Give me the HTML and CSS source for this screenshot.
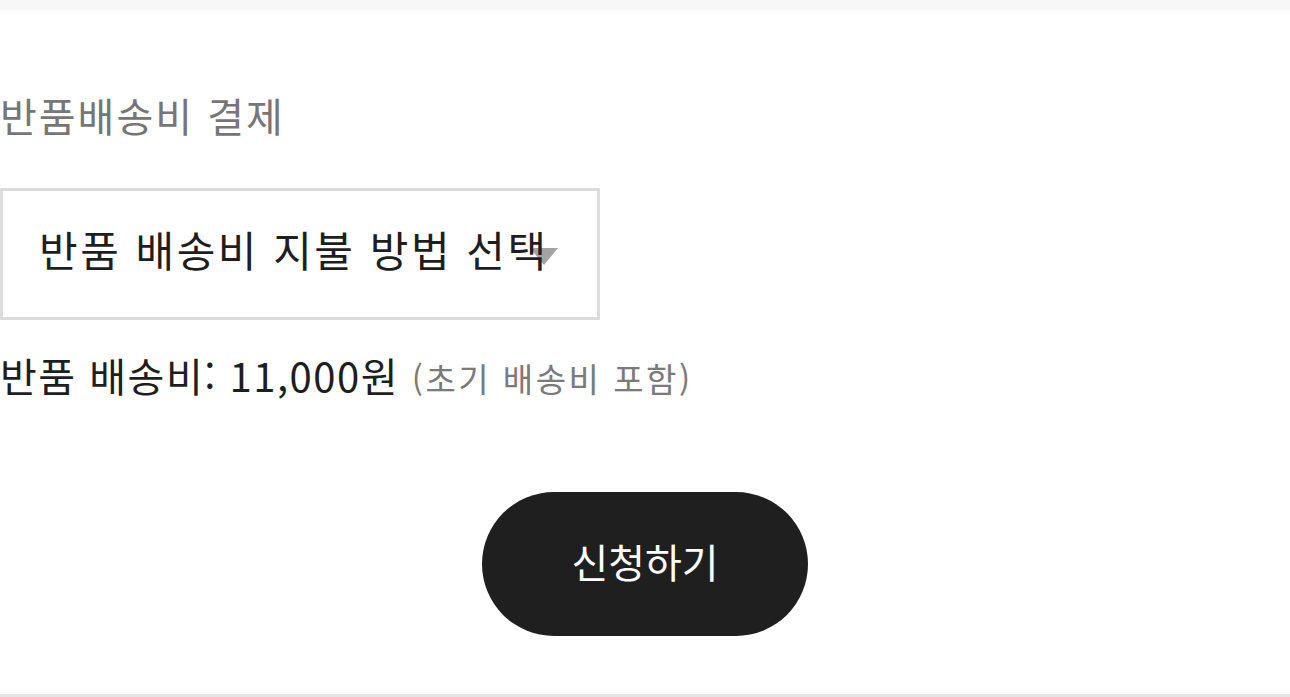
FILE: index.html
```html
<!DOCTYPE html>
<html lang="ko">
<head>
<meta charset="utf-8">
<title>반품배송비 결제</title>
<link rel="stylesheet" href="styles.css">
</head>
<body>
<div class="topbar"></div>
<main class="section">
  <h2 class="title">반품배송비 결제</h2>
  <div class="select">
    <span class="arrow"></span>
    <span class="select-text">반품 배송비 지불 방법 선택</span>
  </div>
  <p class="price">반품 배송비: 11,000원 <span class="note">(초기 배송비 포함)</span></p>
  <div class="actions">
    <button class="submit" type="button">신청하기</button>
  </div>
</main>
<div class="bottom-line"></div>
</body>
</html>
```
FILE: styles.css
```css
html, body {
  margin: 0;
  padding: 0;
  background: #ffffff;
}
body {
  font-family: "Noto Sans CJK KR", "Noto Sans", sans-serif;
  width: 1290px;
  height: 697px;
  overflow: hidden;
  display: flex;
  flex-direction: column;
}
.topbar {
  height: 10px;
  background: #f7f7f7;
  flex: none;
}
.section {
  flex: 1;
  display: flex;
  flex-direction: column;
}
.title {
  margin: 80px 0 0 0;
  font-size: 40px;
  line-height: 50px;
  font-weight: 400;
  letter-spacing: 2px;
  color: #767676;
}
.select {
  position: relative;
  margin-top: 48px;
  width: 600px;
  height: 132px;
  box-sizing: border-box;
  border: 3px solid #dcdcdc;
  display: flex;
  align-items: center;
  padding: 0 0 10px 36px;
}
.select-text {
  position: relative;
  z-index: 1;
  font-size: 42px;
  line-height: 52px;
  letter-spacing: 2.5px;
  color: #1e1e1e;
  white-space: nowrap;
}
.arrow {
  position: absolute;
  left: 527px;
  top: 57px;
  width: 0;
  height: 0;
  border-left: 14px solid transparent;
  border-right: 14px solid transparent;
  border-top: 17px solid #a3a3a3;
}
.price {
  margin: 29px 0 0 0;
  font-size: 40px;
  line-height: 52px;
  letter-spacing: 1.5px;
  color: #1e1e1e;
}
.note {
  font-size: 33px;
  letter-spacing: 2.5px;
  color: #7a7a7a;
}
.actions {
  display: flex;
  justify-content: center;
  margin-top: 88px;
}
.submit {
  width: 326px;
  height: 144px;
  border: none;
  border-radius: 72px;
  background: #1f1f20;
  color: #ffffff;
  font-family: "Noto Sans CJK KR", "Noto Sans", sans-serif;
  font-size: 40px;
  padding: 0 0 6px 0;
}
.bottom-line {
  flex: none;
  height: 3px;
  background: #e5e5e5;
}
```
